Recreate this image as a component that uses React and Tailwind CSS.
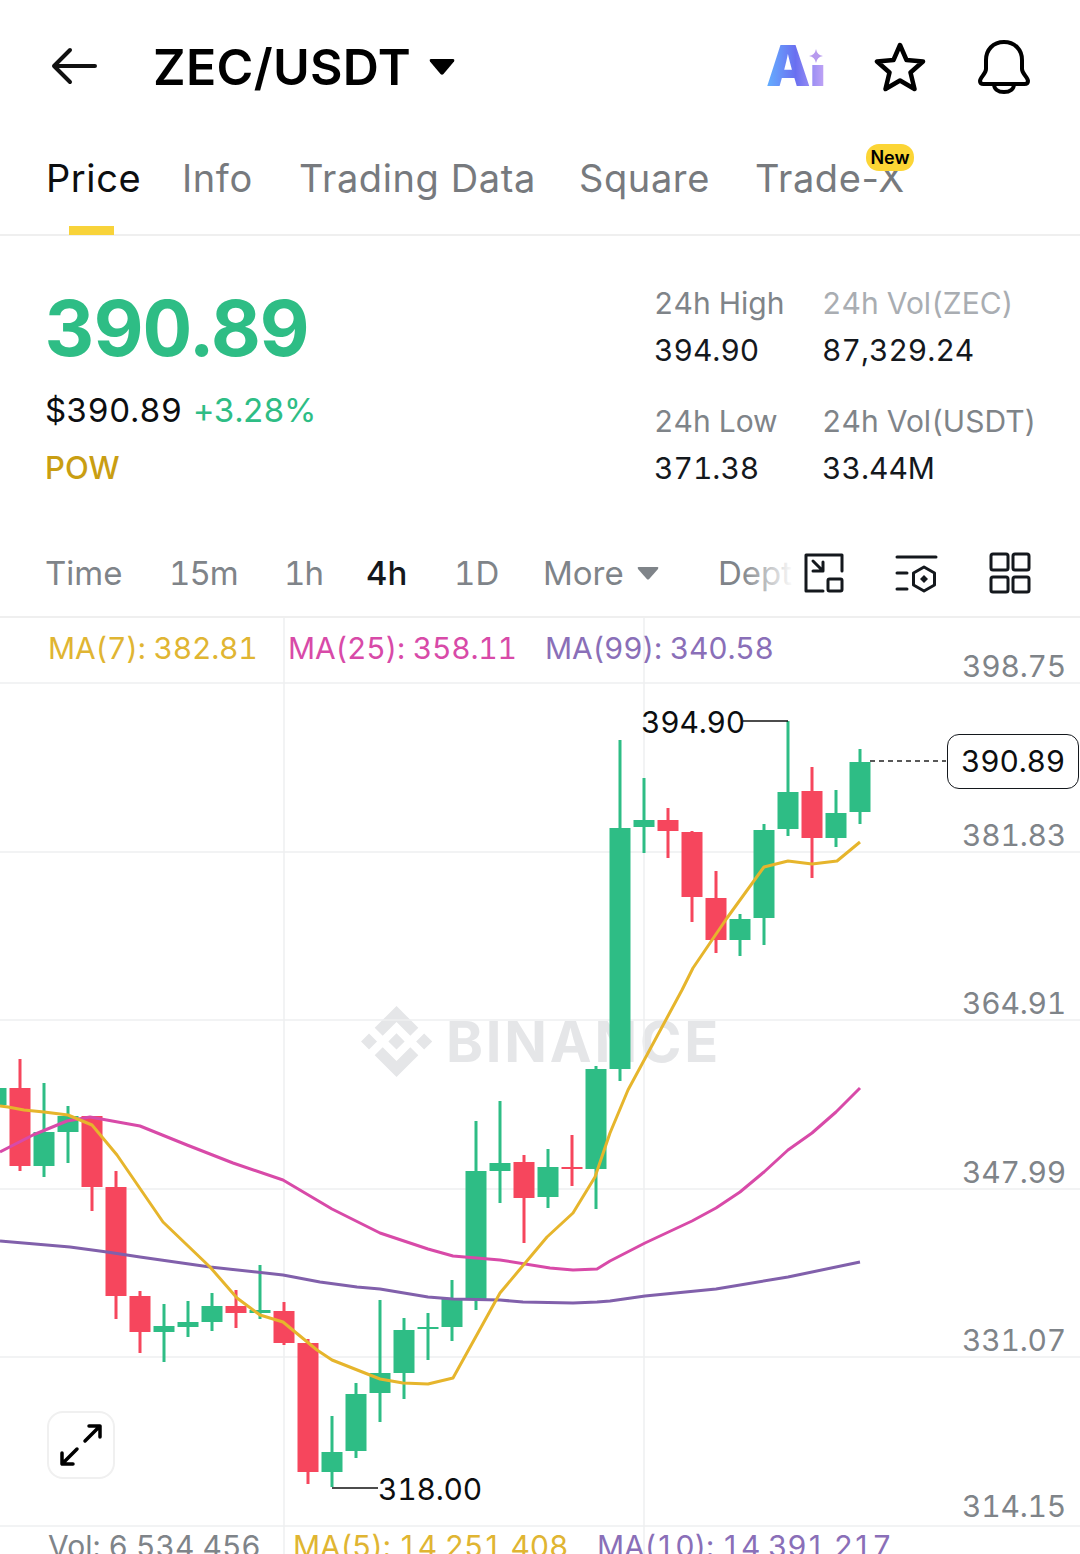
import React from "react";

// [x, color, wickTop, bodyTop, bodyBottom, wickBottom] in page coordinates
const candles = [
  [-4, "g", 1070, 1088, 1105, 1118],
  [20, "r", 1059, 1088, 1166, 1171],
  [44, "g", 1083, 1132, 1166, 1177],
  [68, "g", 1106, 1116, 1132, 1163],
  [92, "r", 1116, 1116, 1187, 1211],
  [116, "r", 1171, 1187, 1296, 1319],
  [140, "r", 1291, 1296, 1332, 1353],
  [164, "g", 1304, 1326, 1332, 1362],
  [188, "g", 1301, 1322, 1327, 1337],
  [212, "g", 1293, 1306, 1322, 1331],
  [236, "r", 1290, 1306, 1313, 1328],
  [260, "g", 1265, 1310, 1313, 1319],
  [284, "r", 1302, 1311, 1343, 1345],
  [308, "r", 1339, 1343, 1472, 1484],
  [332, "g", 1416, 1452, 1472, 1487],
  [356, "g", 1383, 1394, 1451, 1458],
  [380, "g", 1300, 1373, 1393, 1422],
  [404, "g", 1318, 1330, 1373, 1399],
  [428, "g", 1313, 1327, 1329, 1360],
  [452, "g", 1280, 1299, 1327, 1341],
  [476, "g", 1121, 1171, 1299, 1310],
  [500, "g", 1101, 1163, 1171, 1203],
  [524, "r", 1155, 1162, 1198, 1243],
  [548, "g", 1149, 1167, 1197, 1208],
  [572, "r", 1135, 1167, 1169, 1186],
  [596, "g", 1066, 1069, 1169, 1209],
  [620, "g", 740, 828, 1069, 1081],
  [644, "g", 778, 820, 827, 853],
  [668, "r", 808, 820, 831, 858],
  [692, "r", 831, 832, 897, 922],
  [716, "r", 871, 898, 940, 953],
  [740, "g", 914, 919, 940, 956],
  [764, "g", 824, 830, 918, 945],
  [788, "g", 721, 792, 829, 836],
  [812, "r", 767, 791, 838, 878],
  [836, "g", 790, 813, 838, 847],
  [860, "g", 749, 762, 812, 824],
];

const ma7 = "0,1106 8,1107 24,1110 44,1112 68,1115 92,1125 117,1155 163,1222 210,1267 237,1298 260,1315 283,1322 317,1350 332,1360 380,1379 403,1383 428,1384 453,1378 500,1293 547,1237 573,1213 595,1177 610,1133 628,1090 682,990 693,968 727,918 764,867 788,861 812,864 837,861 860,842";
const ma25 = "0,1152 33,1135 67,1121 90,1117 140,1126 187,1145 233,1163 283,1180 332,1209 380,1233 428,1249 453,1256 500,1260 550,1268 573,1270 597,1269 610,1261 645,1243 692,1221 716,1208 740,1192 764,1172 788,1150 812,1133 836,1112 860,1088";
const ma99 = "0,1241 70,1247 107,1252 140,1257 210,1267 283,1275 320,1282 357,1287 380,1289 428,1297 453,1299 500,1300 523,1302 573,1303 597,1302 610,1301 645,1296 716,1289 788,1277 860,1262";

const gridY = [683, 852, 1020, 1189, 1357, 1526];
const gridX = [284, 644];

const tfItems = [
  ["Time", "w-[124px]", "text-[#7f8489]"],
  ["15m", "w-[115px]", "text-[#7f8489] tracking-[-1px]"],
  ["1h", "w-[82px]", "text-[#7f8489] tracking-[-1px]"],
  ["4h", "w-[88px]", "text-[#14181d] font-medium"],
  ["1D", "w-[89px]", "text-[#7f8489]"],
];

function ChartDrawing() {
  return (
    <svg className="absolute inset-0" width="1080" height="936" viewBox="0 618 1080 936" fill="none">
      {gridY.map((y) => (
        <line key={y} x1="0" x2="1080" y1={y} y2={y} stroke="#eeeff1" strokeWidth="1.5" />
      ))}
      {gridX.map((x) => (
        <line key={x} x1={x} x2={x} y1="618" y2="1554" stroke="#eeeff1" strokeWidth="1.5" />
      ))}
      {candles.map(([x, c, wt, bt, bb, wb]) => {
        const col = c === "g" ? "#2ebd85" : "#f6465d";
        return (
          <g key={x} fill={col}>
            <rect x={x - 1.5} y={wt} width="3" height={wb - wt} />
            <rect x={x - 10.5} y={bt} width="21" height={bb - bt} />
          </g>
        );
      })}
      <polyline points={ma25} stroke="#d84aa8" strokeWidth="3" strokeLinejoin="round" />
      <polyline points={ma99} stroke="#8160ab" strokeWidth="3" strokeLinejoin="round" />
      <polyline points={ma7} stroke="#e6b52c" strokeWidth="3" strokeLinejoin="round" />
      <path d="M743 721H788" stroke="#111" strokeWidth="1.5" />
      <path d="M332 1488H378" stroke="#111" strokeWidth="1.5" />
      <path d="M870 761H946" stroke="#222" strokeWidth="1.5" strokeDasharray="5 4" />
    </svg>
  );
}

function Watermark() {
  return (
    <div className="absolute left-[361px] top-[388px] flex items-center gap-[14px]">
      <svg width="71" height="71" viewBox="0 0 126.61 126.61" fill="#e5e6e8">
        <path d="M38.73 53.2l24.59-24.58 24.6 24.6 14.3-14.31L63.32 0 24.42 38.9zM0 63.31l14.3-14.31 14.31 14.31-14.31 14.3zM38.73 73.41l24.59 24.59 24.6-24.6 14.31 14.29-38.9 38.91-38.91-38.88-.02-.02zM98.28 63.31l14.3-14.31 14.31 14.3-14.31 14.32zM77.83 63.3L63.32 48.78 52.59 59.51l-1.24 1.23-2.54 2.54 14.51 14.5 14.51-14.47z" />
      </svg>
      <span className="text-[56px] leading-[70px] font-bold tracking-[2.8px] text-[#e5e6e8]">BINANCE</span>
    </div>
  );
}

export default function App() {
  return (
    <div className="w-[1080px] h-[1554px] overflow-hidden bg-white flex flex-col tabular-nums font-['Inter','Liberation_Sans',sans-serif] text-[#14181d]">
      {/* top bar */}
      <div className="h-[134px] flex items-center pl-[51px] pr-[50px] shrink-0">
        <svg width="48" height="40" viewBox="0 0 48 40" fill="none" stroke="#111" strokeWidth="4" strokeLinecap="round" strokeLinejoin="round">
          <path d="M3 19H44M19 3L3 19L19 35" />
        </svg>
        <span className="ml-[54px] text-[50px] leading-[60px] font-semibold tracking-[0.3px] text-black">ZEC/USDT</span>
        <svg className="ml-[18px]" width="26" height="18" viewBox="0 0 26 18" fill="#000">
          <path d="M2 1H24Q26 1 25 3.500L14.500 16Q13 17.500 11.500 16L1 3.500Q0 1 2 1Z" />
        </svg>
        <div className="ml-auto flex items-center">
          <div className="relative w-[60px] h-[60px] mr-[47px]">
            <span className="absolute left-[-1px] top-[-6px] text-[56px] leading-[70px] font-black tracking-[-1px] bg-gradient-to-r from-[#62b0ff] via-[#6a6ff0] to-[#c2a4f5] bg-clip-text text-transparent">Ai</span>
            <svg className="absolute left-[41px] top-[-2px]" width="18" height="31" viewBox="0 0 18 31">
              <rect x="0" y="0" width="18" height="30" fill="#fff" />
              <path d="M8 14Q9 20 15 21Q9 22 8 28Q7 22 1 21Q7 20 8 14Z" fill="#b79aee" />
            </svg>
          </div>
          <svg className="mr-[52px]" width="52" height="50" viewBox="0 0 52 50" fill="none" stroke="#000" strokeWidth="4.5" strokeLinejoin="round">
            <path d="M26 3L32.500 18L49 19.500L36.500 30.500L40.500 47L26 38.500L11.500 47L15.500 30.500L3 19.500L19.500 18Z" />
          </svg>
          <svg width="52" height="54" viewBox="0 0 52 54" fill="none" stroke="#000" strokeWidth="4" strokeLinecap="round" strokeLinejoin="round">
            <path d="M26 2C15 2 8 10 8 20V29C8 34 2 37 2 41C2 43 3.500 44 5.500 44H46.500C48.500 44 50 43 50 41C50 37 44 34 44 29V20C44 10 37 2 26 2Z" />
            <path d="M16 44C16 49 20 52 26 52C32 52 36 49 36 44" />
          </svg>
        </div>
      </div>

      {/* tabs */}
      <div className="h-[102px] shrink-0 border-b-2 border-[#efefef] flex items-center pl-[46px] pb-[13px] text-[38px] leading-[48px] tracking-[0.6px] text-[#777a7e] normal-nums">
        <span className="relative text-[#0c0e10] w-[136px]">
          Price
          <span className="absolute left-[23px] top-[72px] w-[45px] h-[9px] bg-[#f8d33a]" />
        </span>
        <span className="w-[117px]">Info</span>
        <span className="w-[280px] whitespace-nowrap">Trading Data</span>
        <span className="w-[176px]">Square</span>
        <span className="relative whitespace-nowrap">
          Trade-X
          <span className="absolute left-[111px] top-[-10px] w-[48px] h-[27px] rounded-[13px] bg-[#fcd535] text-[18px] leading-[27px] tracking-normal font-semibold text-black text-center">New</span>
        </span>
      </div>

      {/* price block */}
      <div className="h-[294px] shrink-0 flex">
        <div className="w-[654px] pl-[45px] pt-[52px]">
          <div className="text-[77px] leading-[80px] font-bold text-[#2ebd85] tracking-[-1px]">390.89</div>
          <div className="mt-[22px] flex items-center gap-[11px] text-[33px] leading-[40px]">
            <span className="text-[#0c0e10]">$390.89</span>
            <span className="text-[#2ebd85] tracking-[-0.7px]">+3.28%</span>
          </div>
          <div className="mt-[18px] text-[31px] leading-[40px] font-medium text-[#c99e12]">POW</div>
        </div>
        <div className="pt-[44px] grid grid-cols-[168px_1fr] gap-y-[24px] text-[30px] leading-[47px] content-start">
          <div>
            <div className="text-[#7f8489]">24h High</div>
            <div>394.90</div>
          </div>
          <div>
            <div className="text-[#a9adb2]">24h Vol(ZEC)</div>
            <div>87,329.24</div>
          </div>
          <div>
            <div className="text-[#7f8489]">24h Low</div>
            <div>371.38</div>
          </div>
          <div>
            <div className="text-[#7f8489]">24h Vol(USDT)</div>
            <div>33.44M</div>
          </div>
        </div>
      </div>

      {/* interval row */}
      <div className="h-[88px] shrink-0 border-b-2 border-[#efefef] flex items-center pl-[45px] text-[33px] leading-[44px]">
        {tfItems.map(([label, width, tone]) => (
          <span key={label} className={`${width} ${tone}`}>{label}</span>
        ))}
        <span className="text-[#7f8489] w-[94px]">More</span>
        <svg width="22" height="13" viewBox="0 0 22 13" fill="#7f8489">
          <path d="M1.500 0H20.500Q22 0 21 2L12.200 12Q11 13 9.800 12L1 2Q0 0 1.500 0Z" />
        </svg>
        <div className="relative w-[76px] ml-[59px] overflow-hidden whitespace-nowrap text-[#7f8489]">
          Depth
          <span className="absolute inset-0 bg-gradient-to-r from-transparent from-30% to-white to-100%" />
        </div>
        <svg className="ml-[10px]" width="40" height="40" viewBox="0 0 40 40" fill="none" stroke="#14181d" strokeWidth="3" strokeLinejoin="round" strokeLinecap="round">
          <path d="M19 38H2V2H38V18" />
          <rect x="24" y="26" width="14" height="12" rx="1.500" />
          <path d="M9 8L19 18M19 9V18H9" />
        </svg>
        <svg className="ml-[51px]" width="44" height="40" viewBox="0 0 44 40" fill="none" stroke="#14181d" strokeWidth="3" strokeLinejoin="round" strokeLinecap="round">
          <path d="M2 4H41M2 20H12M2 36H12" />
          <path d="M29 14L39.500 20V32L29 38L18.500 32V20Z" />
          <path d="M29 22L33 26L29 30L25 26Z" fill="#14181d" stroke="none" />
        </svg>
        <svg className="ml-[50px]" width="42" height="42" viewBox="0 0 42 42" fill="none" stroke="#14181d" strokeWidth="3">
          <rect x="2" y="2" width="17" height="16" rx="2" />
          <rect x="24" y="2" width="16" height="16" rx="2" />
          <rect x="2" y="25" width="17" height="15" rx="2" />
          <rect x="24" y="25" width="16" height="15" rx="2" />
        </svg>
      </div>

      {/* chart */}
      <div className="relative flex-1 overflow-hidden text-[30px] tracking-[-0.2px]">
        <Watermark />
        <ChartDrawing />

        <div className="relative h-[65px] pl-[48px] pb-[5px] grid grid-cols-[240px_257px_1fr] items-center leading-[40px]">
          <span className="text-[#e0b532]">MA(7): 382.81</span>
          <span className="text-[#d84aa8]">MA(25): 358.11</span>
          <span className="text-[#8a6fb8]">MA(99): 340.58</span>
        </div>
        <div className="h-[843px]" />
        <div className="relative pl-[48px] grid grid-cols-[245px_304px_1fr] leading-[40px] whitespace-nowrap">
          <span className="text-[#7f8489] tracking-normal">Vol: 6,534,456</span>
          <span className="text-[#e0b532]">MA(5): 14,251,408</span>
          <span className="text-[#8a6fb8]">MA(10): 14,391,217</span>
        </div>

        {/* price axis */}
        <span className="absolute left-[962px] top-[30px] leading-[36px] text-[#7f8489]">398.75</span>
        <span className="absolute left-[962px] top-[199px] leading-[36px] text-[#7f8489]">381.83</span>
        <span className="absolute left-[962px] top-[367px] leading-[36px] text-[#7f8489]">364.91</span>
        <span className="absolute left-[962px] top-[536px] leading-[36px] text-[#7f8489]">347.99</span>
        <span className="absolute left-[962px] top-[704px] leading-[36px] text-[#7f8489]">331.07</span>
        <span className="absolute left-[962px] top-[870px] leading-[36px] text-[#7f8489]">314.15</span>

        {/* high, low and last price */}
        <span className="absolute left-[641px] top-[86px] leading-[36px] text-[#0c0e10]">394.90</span>
        <span className="absolute left-[378px] top-[853px] leading-[36px] text-[#0c0e10]">318.00</span>
        <div className="absolute left-[947px] top-[116px] w-[132px] h-[55px] border-[1.5px] border-[#14181d] rounded-[12px] bg-white flex items-center justify-center text-[#0c0e10]">390.89</div>

        {/* expand button */}
        <div className="absolute left-[47px] top-[793px] w-[68px] h-[68px] rounded-[16px] border-2 border-[#f0f0f0] bg-white flex items-center justify-center">
          <svg width="44" height="44" viewBox="0 0 44 44" fill="none" stroke="#000" strokeWidth="3.5" strokeLinecap="round" strokeLinejoin="round">
            <path d="M26 18L41 3M30 3H41V14M3 41L18 26M3 30V41H14" />
          </svg>
        </div>
      </div>
    </div>
  );
}
